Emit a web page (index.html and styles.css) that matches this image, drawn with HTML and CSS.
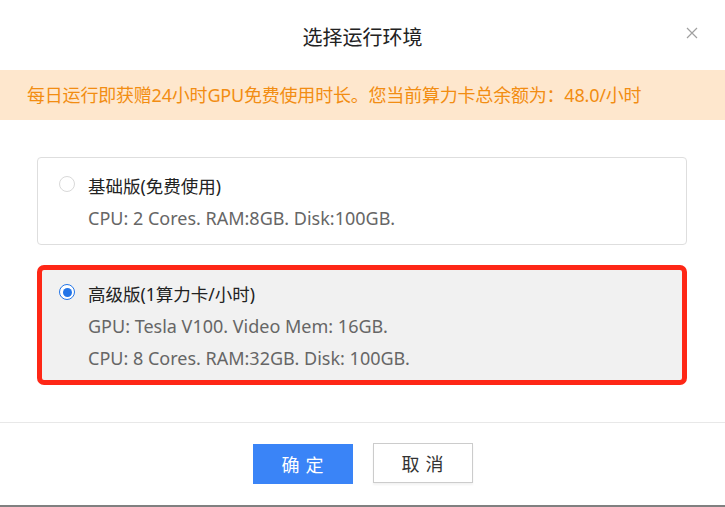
FILE: index.html
```html
<!DOCTYPE html>
<html lang="zh-CN">
<head>
<meta charset="utf-8">
<link rel="stylesheet" href="styles.css">
</head>
<body>
<div class="modal">
  <div class="header">
    <div class="title">选择运行环境</div>
    <svg class="close" width="12" height="12" viewBox="0 0 12 12"><path d="M1 1L11 11M11 1L1 11" stroke="#a0a0a0" stroke-width="1.2" fill="none"/></svg>
  </div>
  <div class="banner">每日运行即获赠24小时GPU免费使用时长。您当前算力卡总余额为：48.0/小时</div>
  <div class="body">
    <div class="card">
      <span class="radio"></span>
      <div class="info">
        <div class="name">基础版(免费使用)</div>
        <div class="desc">CPU: 2 Cores. RAM:8GB. Disk:100GB.</div>
      </div>
    </div>
    <div class="card selected">
      <span class="radio checked"></span>
      <div class="info">
        <div class="name">高级版(1算力卡/小时)</div>
        <div class="desc">GPU: Tesla V100. Video Mem: 16GB.</div>
        <div class="desc">CPU: 8 Cores. RAM:32GB. Disk: 100GB.</div>
      </div>
    </div>
  </div>
  <div class="footer">
    <button class="btn primary">确定</button>
    <button class="btn">取消</button>
  </div>
</div>
</body>
</html>
```
FILE: styles.css
```css
html, body {
  margin: 0;
  padding: 0;
  background: #fff;
}
body {
  width: 725px;
  height: 507px;
  overflow: hidden;
  font-family: "Noto Sans", "Noto Sans CJK SC", sans-serif;
}
.modal {
  height: 505px;
  border-bottom: 2px solid #808080;
  display: flex;
  flex-direction: column;
}
.header {
  position: relative;
  height: 70px;
  flex: none;
  display: flex;
  align-items: center;
  justify-content: center;
}
.title {
  font-family: "Noto Sans CJK SC", sans-serif;
  font-size: 20px;
  color: #222;
  margin-top: 3px;
}
.close {
  position: absolute;
  right: 27px;
  top: 27px;
}
.banner {
  flex: none;
  height: 50px;
  background: #fee7cd;
  color: #f28d12;
  font-size: 18px;
  line-height: 50px;
  padding-left: 27px;
  white-space: nowrap;
  letter-spacing: -0.2px;
}
.body {
  flex: none;
  padding: 37px 38px 0 37px;
  display: flex;
  flex-direction: column;
  gap: 20px;
  height: 303px;
  box-sizing: border-box;
  border-bottom: 1px solid #e8e8e8;
}
.card {
  border: 1px solid #dedede;
  border-radius: 4px;
  display: flex;
  align-items: flex-start;
  padding: 12px 20px 10px 21px;
  gap: 13px;
}
.card.selected {
  border: 5px solid #fe2716;
  border-radius: 7px;
  background: #f1f1f1;
  padding: 8px 16px 6px 17px;
}
.radio {
  width: 16px;
  height: 16px;
  border-radius: 50%;
  border: 1px solid #d9d9d9;
  box-sizing: border-box;
  margin-top: 6px;
  background: #fff;
  flex: none;
}
.radio.checked {
  border: 1.5px solid #2375e8;
  display: flex;
  align-items: center;
  justify-content: center;
}
.radio.checked::after {
  content: "";
  width: 9px;
  height: 9px;
  border-radius: 50%;
  background: #2375e8;
}
.info {
  display: flex;
  flex-direction: column;
}
.name {
  font-size: 17.5px;
  line-height: 32px;
  color: #222;
}
.desc {
  font-size: 18px;
  line-height: 32px;
  color: #666;
}
.footer {
  flex: 1;
  display: flex;
  justify-content: center;
  align-items: flex-start;
  gap: 20px;
  padding-top: 20px;
}
.btn {
  width: 100px;
  height: 40px;
  font-family: "Noto Sans CJK SC", sans-serif;
  font-size: 18px;
  letter-spacing: 6px;
  text-indent: 6px;
  border: 1px solid #cccccc;
  background: #fff;
  color: #333;
  box-shadow: 0 2px 2px rgba(0,0,0,0.05);
  padding: 0;
}
.btn.primary {
  background: #3a84f7;
  border-color: #3a84f7;
  color: #fff;
  margin-top: 1px;
  box-shadow: none;
}
```
